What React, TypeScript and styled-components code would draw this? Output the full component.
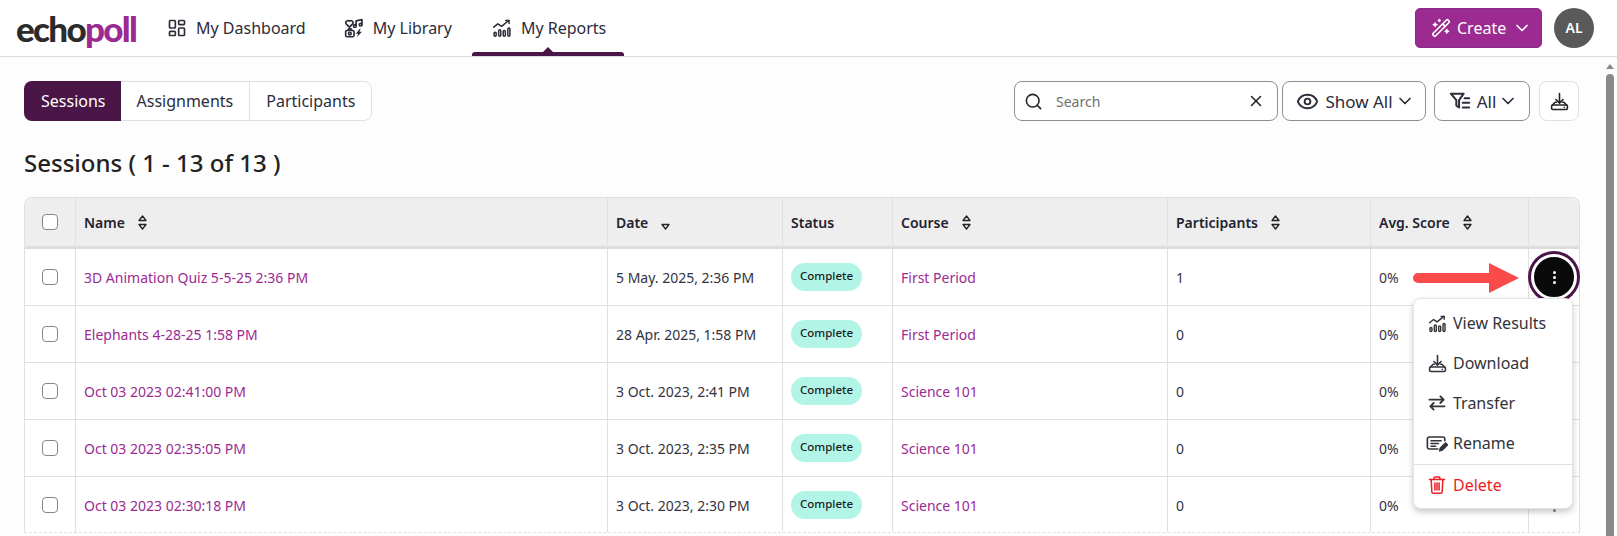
import React from 'react';
import styled, {createGlobalStyle} from 'styled-components';
import {ChevronDown, Eye, LayoutDashboard, Search, WandSparkles, X} from 'lucide-react';

const GRAPE_DARK = '#4a1648';
const GRAPE = '#9b2a91';
const BORDER = '#e0e0e0';
const INK = '#222230';

const GlobalStyle = createGlobalStyle`
  * { box-sizing: border-box; }
  html, body { margin: 0; padding: 0; height: 100%; overflow: hidden; }
  body { font-family: "Noto Sans", "Open Sans", sans-serif; color: ${INK}; background: #fdfdfd; }
  #root { height: 100%; }
`;

const Page = styled.div`
  display: flex;
  flex-direction: column;
  height: 536px;
  overflow: hidden;
`;

const Header = styled.header`
  display: flex;
  align-items: center;
  flex: 0 0 57px;
  height: 57px;
  padding: 0 23px 1px 16px;
  background: #fff;
  border-bottom: 1px solid #dcdcdc;
`;

const Logo = styled.div`
  width: 119px;
  margin-right: 12px;
  font-family: "Lato", sans-serif;
  font-size: 35px;
  font-weight: 900;
  letter-spacing: -1.7px;
  line-height: 40px;
  color: #2b2b2b;
  white-space: nowrap;
  span { color: ${GRAPE}; }
`;

const Nav = styled.nav`
  display: flex;
  align-self: stretch;
  flex: 1;
`;

const NavItem = styled.a<{$active?: boolean}>`
  position: relative;
  display: flex;
  align-items: center;
  gap: 9px;
  margin-left: ${({$active}) => ($active ? '2px' : '0')};
  padding: 0 18px 0 20px;
  font-size: 16px;
  color: #2c2c3a;
  cursor: pointer;

  ${({$active}) =>
    $active &&
    `
    &::after {
      content: '';
      position: absolute;
      left: 0;
      right: 0;
      bottom: -1px;
      height: 4px;
      background: ${GRAPE_DARK};
      border-radius: 3px 3px 0 0;
    }
    &::before {
      content: '';
      position: absolute;
      left: 50%;
      bottom: 2px;
      margin-left: -6px;
      border: 6px solid transparent;
      border-top: 0;
      border-bottom-color: ${GRAPE_DARK};
    }
  `}
`;

const CreateButton = styled.button`
  display: flex;
  align-items: center;
  gap: 6px;
  width: 127px;
  height: 40px;
  margin-right: 12px;
  padding: 0 0 0 15px;
  color: #fff;
  font: 400 16px "Noto Sans", sans-serif;
  background: ${GRAPE};
  border: 1px solid #8a2a82;
  border-radius: 5px;
`;

const Avatar = styled.div`
  display: flex;
  align-items: center;
  justify-content: center;
  width: 40px;
  height: 40px;
  color: #fff;
  font-size: 14px;
  font-weight: 600;
  background: #595959;
  border-radius: 50%;
`;

const Body = styled.div`
  display: flex;
  flex: 1;
  min-height: 0;
`;

const Main = styled.main`
  flex: 1;
  min-width: 0;
  display: flex;
  flex-direction: column;
  padding: 24px 24px 0 24px;
`;

const Toolbar = styled.div`
  display: flex;
  justify-content: space-between;
  height: 40px;
`;

const Tabs = styled.div`
  display: flex;
  height: 40px;
  background: #fff;
  border: 1px solid ${BORDER};
  border-radius: 8px;
`;

const Tab = styled.button<{$active?: boolean}>`
  padding: ${({$active}) => ($active ? '0 15px 0 17px' : '0 16px')};
  margin: ${({$active}) => ($active ? '-1px 0 -1px -1px' : '0')};
  font: 400 16px "Noto Sans", sans-serif;
  color: ${({$active}) => ($active ? '#fff' : '#2c2c3a')};
  background: ${({$active}) => ($active ? GRAPE_DARK : 'transparent')};
  border: 0;
  border-right: ${({$active}) => ($active ? '0' : `1px solid ${BORDER}`)};
  border-radius: ${({$active}) => ($active ? '8px 0 0 8px' : '0')};
  &:last-child { border-right: 0; }
`;

const Tools = styled.div`
  display: flex;
  align-items: center;
  margin-right: 1px;
`;

const SearchBox = styled.label`
  display: flex;
  align-items: center;
  width: 264px;
  height: 40px;
  padding: 0 12px 0 9px;
  background: #fff;
  border: 1px solid #8d8d8d;
  border-radius: 8px;
`;

const SearchInput = styled.input`
  flex: 1;
  min-width: 0;
  margin-left: 11px;
  font: 400 14px "Noto Sans", sans-serif;
  color: ${INK};
  background: transparent;
  border: 0;
  outline: 0;
  &::placeholder { color: #6f6f6f; opacity: 1; }
`;

const ToolButton = styled.button<{$width: number; $gap: number}>`
  display: flex;
  align-items: center;
  justify-content: center;
  gap: 6px;
  width: ${({$width}) => $width}px;
  height: 40px;
  margin-left: ${({$gap}) => $gap}px;
  padding: 0 0 0 3px;
  font: 400 17px "Noto Sans", sans-serif;
  color: #2c2c3a;
  background: #fff;
  border: 1px solid #8d8d8d;
  border-radius: 8px;
`;

const ToolChevron = styled(ChevronDown)`
  margin-left: -4px;
`;

const IconButton = styled.button`
  display: flex;
  align-items: center;
  justify-content: center;
  width: 40px;
  height: 40px;
  margin-left: 9px;
  padding: 0;
  color: #222;
  background: #fff;
  border: 1px solid ${BORDER};
  border-radius: 8px;
`;

const Title = styled.h1`
  margin: 27px 0 19px;
  font-size: 24px;
  font-weight: 500;
  line-height: 30px;
  color: #222;
`;

const TableWrap = styled.div`
  position: relative;
  height: 335px;
  overflow: hidden;
`;

const Table = styled.table`
  width: 1556px;
  table-layout: fixed;
  border-collapse: separate;
  border-spacing: 0;
  background: #fff;
  border: 1px solid ${BORDER};
  border-bottom: 0;
  border-radius: 8px 8px 0 0;
`;

const Th = styled.th<{$width: number}>`
  width: ${({$width}) => $width}px;
  height: 51px;
  padding: 0 8px;
  font-size: 14px;
  font-weight: 600;
  text-align: left;
  background: #eee;
  border-right: 1px solid ${BORDER};
  border-bottom: 3px solid #ddd;
  &:first-child { border-top-left-radius: 8px; }
  &:last-child { border-right: 0; border-top-right-radius: 8px; }
`;

const SortLabel = styled.span`
  display: inline-flex;
  align-items: center;
  gap: 12px;
`;

const Td = styled.td`
  height: 57px;
  padding: 0 8px;
  font-size: 14px;
  color: #33333f;
  white-space: nowrap;
  border-right: 1px solid ${BORDER};
  border-bottom: 1px solid ${BORDER};
  &:last-child { border-right: 0; }
`;

const CheckCell = styled(Td)`
  text-align: center;
`;

const ActionCell = styled(Td)`
  padding: 0;
`;

const Check = styled.span`
  display: block;
  width: 16px;
  height: 16px;
  margin: 0 auto;
  background: #fff;
  border: 1px solid #858585;
  border-radius: 4px;
`;

const LinkText = styled.a`
  color: ${GRAPE};
  cursor: pointer;
`;

const Badge = styled.span`
  display: inline-block;
  width: 71px;
  height: 28px;
  font-size: 11.5px;
  font-weight: 500;
  line-height: 26px;
  text-align: center;
  color: #1c1c24;
  background: #b2f5e6;
  border-radius: 14px;
`;

const Kebab = styled.span<{$light?: boolean}>`
  display: flex;
  flex-direction: column;
  align-items: center;
  gap: 2px;
  i {
    display: block;
    width: 3px;
    height: 3px;
    border-radius: 50%;
    background: ${({$light}) => ($light ? '#fff' : '#888')};
  }
`;

const ActionRing = styled.button`
  display: flex;
  align-items: center;
  justify-content: center;
  width: 46px;
  height: 46px;
  margin: 0 auto;
  padding: 0;
  background: #0a0a0a;
  border: 3px solid #fff;
  border-radius: 50%;
  box-shadow: 0 0 0 3px ${GRAPE_DARK};
`;

const ArrowMark = styled.svg`
  position: absolute;
  top: 66px;
  right: 61px;
`;

const Menu = styled.div`
  position: absolute;
  top: 101px;
  right: 7px;
  width: 160px;
  padding: 4px 0 3px;
  background: #fff;
  border: 1px solid #e4e4e4;
  border-radius: 8px;
  box-shadow: 0 3px 6px rgba(0, 0, 0, 0.22);
`;

const MenuItem = styled.div<{$danger?: boolean}>`
  display: flex;
  align-items: center;
  gap: 5px;
  height: 40px;
  padding-left: 12px;
  font-size: 16px;
  color: ${({$danger}) => ($danger ? '#ee1c25' : '#33333a')};
`;

const MenuIcon = styled.span`
  display: flex;
  align-items: center;
  justify-content: center;
  width: 22px;
`;

const MenuDivider = styled.div`
  height: 1px;
  margin-top: 1px;
  background: ${BORDER};
`;

const EdgeStrip = styled.div`
  flex: 1;
  border-top: 1px dashed #e2e2e2;
`;

const Scrollbar = styled.div`
  display: flex;
  flex-direction: column;
  align-items: center;
  flex: 0 0 11px;
  margin-right: 2px;
  padding-top: 7px;
`;

const ScrollArrow = styled.span`
  margin-bottom: 5px;
  border: 4px solid transparent;
  border-top: 0;
  border-bottom: 5px solid #8a8a8a;
`;

const ScrollThumb = styled.span`
  flex: 1;
  width: 8px;
  background: #8a8a8a;
  border-radius: 4px 4px 0 0;
`;

const LibraryIcon = () => (
  <svg width="20" height="20" viewBox="0 0 24 24" fill="none" stroke="currentColor" strokeWidth="2" strokeLinejoin="round">
    <path d="M6.5 11 2.6 7a2.5 2.5 0 0 1 3.9-3.1A2.5 2.5 0 0 1 10.4 7z" />
    <path d="M14.5 9.5V3.5l7-1.5v6" />
    <circle cx="13" cy="9.5" r="1.6" />
    <circle cx="20" cy="8" r="1.6" />
    <rect x="2" y="15" width="10" height="7.5" rx="1.5" />
    <circle cx="7" cy="18.7" r="1.6" />
    <path d="M4.5 15l1-2h3l1 2" />
    <path d="M19 13l-5 6h3l-1.5 4 6-6.500h-3l1.500-3.500z" fill="currentColor" stroke="none" />
  </svg>
);

const ReportsIcon = ({size = 20}: {size?: number}) => (
  <svg width={size} height={size} viewBox="0 0 24 24" fill="none" stroke="currentColor" strokeWidth="1.8" strokeLinecap="round" strokeLinejoin="round">
    <path d="M2 11l5-4 4.500 3L20 3" />
    <path d="M16.500 3H20.500V6.500" />
    <rect x="2.500" y="17" width="2.500" height="5" rx="1.200" />
    <rect x="8" y="14" width="2.500" height="8" rx="1.200" />
    <rect x="13.500" y="15" width="2.500" height="7" rx="1.200" />
    <rect x="19" y="12" width="2.500" height="10" rx="1.200" />
  </svg>
);

const TrayIcon = ({size = 19}: {size?: number}) => (
  <svg width={size} height={size} viewBox="0 0 24 24" fill="none" stroke="currentColor" strokeWidth="2" strokeLinecap="round" strokeLinejoin="round">
    <path d="M12 2v12M7.500 9.500 12 14l4.500-4.500" />
    <path d="M8 13H6.500L3 16.500M16 13h1.500L21 16.500" />
    <rect x="2" y="16.500" width="20" height="5.500" rx="1.500" />
    <path d="M18 19.300h.01" />
  </svg>
);

const FilterIcon = () => (
  <svg width="22" height="22" viewBox="0 0 24 24" fill="none" stroke="currentColor" strokeWidth="2.200" strokeLinecap="round" strokeLinejoin="round">
    <path d="M2 4h14l-5 7v8l-3-2v-6z" />
    <path d="M17 9h5M15 14h7M15 19h7" />
  </svg>
);

const TransferIcon = () => (
  <svg width="20" height="20" viewBox="0 0 24 24" fill="none" stroke="currentColor" strokeWidth="2.200" strokeLinecap="round" strokeLinejoin="round">
    <path d="M3 8h17M16 4l4 4-4 4" />
    <path d="M21 16H4M8 12l-4 4 4 4" />
  </svg>
);

const RenameIcon = () => (
  <svg width="22" height="22" viewBox="0 0 24 24" fill="none" stroke="currentColor" strokeWidth="1.800" strokeLinecap="round" strokeLinejoin="round">
    <path d="M13 18.500H3.500a2 2 0 0 1-2-2v-9a2 2 0 0 1 2-2h15a2 2 0 0 1 2 2v2" />
    <path d="M5.500 9.500h11M5.500 12.500h8M5.500 15.500h5" />
    <path d="M15 20.500l.8-3 5.500-5.500 2 2-5.500 5.500z" fill="currentColor" />
  </svg>
);

const TrashIcon = () => (
  <svg width="20" height="20" viewBox="0 0 24 24" fill="none" stroke="currentColor" strokeWidth="1.800" strokeLinecap="round" strokeLinejoin="round">
    <path d="M3 5.500h18M8.500 5.500V3.500a1 1 0 0 1 1-1h5a1 1 0 0 1 1 1v2" />
    <path d="M5 5.500l.8 14.500a2 2 0 0 0 2 2h8.400a2 2 0 0 0 2-2l.8-14.500" />
    <path d="M9.500 9.500v8.500M12 9.500v8.500M14.500 9.500v8.500" />
  </svg>
);

const SortIcon = ({down}: {down?: boolean}) => (
  <svg width="11" height="15" viewBox="0 0 11 15" fill="none" stroke="#222" strokeWidth="1.300" strokeLinejoin="round">
    {!down && <path d="M5.500 1 9 5.500H2z" />}
    <path d="M2 9.500h7L5.500 14z" />
  </svg>
);

interface Session {
  name: string;
  date: string;
  course: string;
  participants: number;
}

const sessions: Session[] = [
  {name: '3D Animation Quiz 5-5-25 2:36 PM', date: '5 May. 2025, 2:36 PM', course: 'First Period', participants: 1},
  {name: 'Elephants 4-28-25 1:58 PM', date: '28 Apr. 2025, 1:58 PM', course: 'First Period', participants: 0},
  {name: 'Oct 03 2023 02:41:00 PM', date: '3 Oct. 2023, 2:41 PM', course: 'Science 101', participants: 0},
  {name: 'Oct 03 2023 02:35:05 PM', date: '3 Oct. 2023, 2:35 PM', course: 'Science 101', participants: 0},
  {name: 'Oct 03 2023 02:30:18 PM', date: '3 Oct. 2023, 2:30 PM', course: 'Science 101', participants: 0},
];

const App = () => (
  <Page>
    <GlobalStyle />
    <Header>
      <Logo>
        echo<span>poll</span>
      </Logo>
      <Nav>
        <NavItem>
          <LayoutDashboard size={20} strokeWidth={2} />
          My Dashboard
        </NavItem>
        <NavItem>
          <LibraryIcon />
          My Library
        </NavItem>
        <NavItem $active>
          <ReportsIcon />
          My Reports
        </NavItem>
      </Nav>
      <CreateButton>
        <WandSparkles size={20} strokeWidth={2} />
        Create
        <ChevronDown size={20} strokeWidth={2} />
      </CreateButton>
      <Avatar>AL</Avatar>
    </Header>
    <Body>
      <Main>
        <Toolbar>
          <Tabs>
            <Tab $active>Sessions</Tab>
            <Tab>Assignments</Tab>
            <Tab>Participants</Tab>
          </Tabs>
          <Tools>
            <SearchBox>
              <Search size={19} strokeWidth={2} color="#222" />
              <SearchInput placeholder="Search" />
              <X size={18} strokeWidth={2} color="#222" />
            </SearchBox>
            <ToolButton $width={144} $gap={4}>
              <Eye size={23} strokeWidth={2} />
              Show All
              <ToolChevron size={20} strokeWidth={2} />
            </ToolButton>
            <ToolButton $width={96} $gap={8}>
              <FilterIcon />
              All
              <ToolChevron size={20} strokeWidth={2} />
            </ToolButton>
            <IconButton aria-label="Download">
              <TrayIcon />
            </IconButton>
          </Tools>
        </Toolbar>
        <Title>Sessions ( 1 - 13 of 13 )</Title>
        <TableWrap>
          <Table>
            <thead>
              <tr>
                <Th $width={51}>
                  <Check />
                </Th>
                <Th $width={532}>
                  <SortLabel>
                    Name <SortIcon />
                  </SortLabel>
                </Th>
                <Th $width={175}>
                  <SortLabel>
                    Date <SortIcon down />
                  </SortLabel>
                </Th>
                <Th $width={110}>Status</Th>
                <Th $width={275}>
                  <SortLabel>
                    Course <SortIcon />
                  </SortLabel>
                </Th>
                <Th $width={203}>
                  <SortLabel>
                    Participants <SortIcon />
                  </SortLabel>
                </Th>
                <Th $width={158}>
                  <SortLabel>
                    Avg. Score <SortIcon />
                  </SortLabel>
                </Th>
                <Th $width={50} />
              </tr>
            </thead>
            <tbody>
              {sessions.map((session, index) => (
                <tr key={session.name}>
                  <CheckCell>
                    <Check />
                  </CheckCell>
                  <Td>
                    <LinkText>{session.name}</LinkText>
                  </Td>
                  <Td>{session.date}</Td>
                  <Td>
                    <Badge>Complete</Badge>
                  </Td>
                  <Td>
                    <LinkText>{session.course}</LinkText>
                  </Td>
                  <Td>{session.participants}</Td>
                  <Td>0%</Td>
                  <ActionCell>
                    {index === 0 ? (
                      <ActionRing aria-label="Actions">
                        <Kebab $light>
                          <i />
                          <i />
                          <i />
                        </Kebab>
                      </ActionRing>
                    ) : (
                      <Kebab>
                        <i />
                        <i />
                        <i />
                      </Kebab>
                    )}
                  </ActionCell>
                </tr>
              ))}
            </tbody>
          </Table>
          <ArrowMark width="106" height="30" viewBox="0 0 106 30">
            <path d="M5 10H76V0L106 15 76 30V20H5a5 5 0 0 1 0-10z" fill="#fa4a4a" />
          </ArrowMark>
          <Menu>
            <MenuItem>
              <MenuIcon>
                <ReportsIcon size={19} />
              </MenuIcon>
              View Results
            </MenuItem>
            <MenuItem>
              <MenuIcon>
                <TrayIcon />
              </MenuIcon>
              Download
            </MenuItem>
            <MenuItem>
              <MenuIcon>
                <TransferIcon />
              </MenuIcon>
              Transfer
            </MenuItem>
            <MenuItem>
              <MenuIcon>
                <RenameIcon />
              </MenuIcon>
              Rename
            </MenuItem>
            <MenuDivider />
            <MenuItem $danger>
              <MenuIcon>
                <TrashIcon />
              </MenuIcon>
              Delete
            </MenuItem>
          </Menu>
        </TableWrap>
        <EdgeStrip />
      </Main>
      <Scrollbar>
        <ScrollArrow />
        <ScrollThumb />
      </Scrollbar>
    </Body>
  </Page>
);

export default App;
